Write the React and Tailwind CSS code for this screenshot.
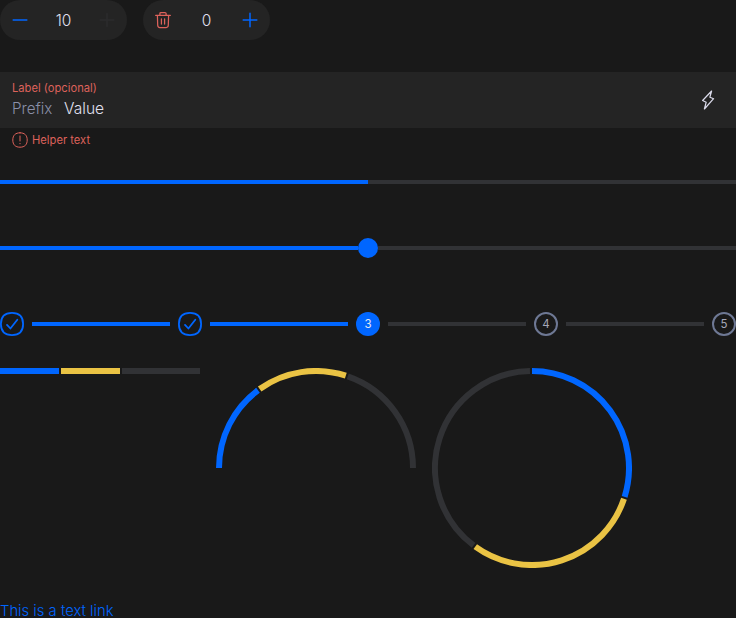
import React from "react";

const BLUE = "#0066ff";
const YELLOW = "#eac344";
const TRACK = "#313235";

// Angles are in degrees, clockwise from twelve o'clock.
function arc(start, end) {
  const point = (deg) => {
    const a = (deg * Math.PI) / 180;
    return `${(100 + 97 * Math.sin(a)).toFixed(3)} ${(100 - 97 * Math.cos(a)).toFixed(3)}`;
  };
  return `M${point(start)}A97 97 0 ${end - start > 180 ? 1 : 0} 1 ${point(end)}`;
}

function Chart({ height, segments }) {
  return (
    <svg width="200" height={height} viewBox={`0 0 200 ${height}`} fill="none" strokeWidth="6">
      {segments.map(([start, end, color]) => (
        <path key={start} d={arc(start, end)} stroke={color} />
      ))}
    </svg>
  );
}

function Plus({ className }) {
  return (
    <svg className={className} width="20" height="20" viewBox="0 0 20 20" fill="none" stroke="currentColor" strokeWidth="1.5" strokeLinecap="round">
      <path d="M3.2 10H16.8M10 3.2V16.8" />
    </svg>
  );
}

function Minus() {
  return (
    <svg width="20" height="20" viewBox="0 0 20 20" fill="none" stroke="#0066ff" strokeWidth="1.5" strokeLinecap="round">
      <path d="M3.2 10H16.8" />
    </svg>
  );
}

function Trash() {
  return (
    <svg width="20" height="20" viewBox="0 0 20 20" fill="none" stroke="#dd625b" strokeWidth="1.25" strokeLinecap="round" strokeLinejoin="round">
      <path d="M2.7 5.4H17.3M6.9 5V3.6Q6.9 2.5 8 2.5H12Q13.1 2.5 13.1 3.6V5M4.4 5.6L4.7 15.3Q4.8 17.5 6.8 17.5H13.2Q15.2 17.5 15.3 15.3L15.6 5.6M8.4 8.8V14M11.6 8.8V14" />
    </svg>
  );
}

function Counter({ value, left, right }) {
  return (
    <div className="flex h-10 w-[127px] items-center justify-between rounded-full bg-[#242424] px-2.5">
      {left}
      <span className="pt-0.5 text-[15.5px] leading-6 font-light text-[#e0e0ef]">{value}</span>
      {right}
    </div>
  );
}

function Done() {
  return (
    <svg className="shrink-0" width="24" height="24" viewBox="0 0 24 24" fill="none" stroke="#0066ff" strokeLinecap="round" strokeLinejoin="round">
      <path strokeWidth="1.8" d="M12 .9C19.3 .9 23.1 4.7 23.1 12S19.3 23.1 12 23.1 .9 19.3 .9 12 4.7 .9 12 .9Z" />
      <path strokeWidth="1.8" d="M7 12.9L10.4 16.5L17.3 7.8" />
    </svg>
  );
}

function Step({ children, active }) {
  return (
    <div
      className={
        active
          ? "flex size-6 shrink-0 items-center justify-center rounded-full bg-[#0066ff] text-[11.5px] leading-4 text-[#e6e6f0]"
          : "flex size-6 shrink-0 items-center justify-center rounded-full border-2 border-[#6e7894] text-[11.5px] leading-4 text-[#a5a7b8]"
      }
    >
      {children}
    </div>
  );
}

function Line({ done }) {
  return <div className={done ? "mx-2 h-1 flex-1 bg-[#0066ff]" : "mx-2 h-1 flex-1 bg-[#313235]"} />;
}

export default function App() {
  return (
    <main className="h-[618px] w-[736px] overflow-hidden bg-[#191919] font-['Inter',sans-serif]">
      <div className="flex gap-4">
        <Counter value="10" left={<Minus />} right={<Plus className="text-[#2b2b2c]" />} />
        <Counter value="0" left={<Trash />} right={<Plus className="text-[#0066ff]" />} />
      </div>

      <div className="mt-8 flex h-14 items-center justify-between bg-[#242424] px-3">
        <div>
          <div className="text-[11.2px] leading-4 text-[#dd625b]">Label (opcional)</div>
          <div className="flex items-baseline gap-3 pt-px text-base leading-6 font-light">
            <span className="w-10 text-[15.2px] text-[#8a8fa8]">Prefix</span>
            <span className="text-[15.6px] text-[#e0e0ef]">Value</span>
          </div>
        </div>
        <svg className="mr-1.5" width="20" height="20" viewBox="0 0 20 20" fill="none" stroke="#dcdcec" strokeWidth="1.2" strokeLinejoin="round">
          <path d="M13.6 1L4.6 10.5L8.2 12.2L6.4 19L15.6 8.7L11.9 7.2Z" />
        </svg>
      </div>
      <div className="flex h-6 items-center gap-1 pl-3 text-[11.2px] leading-4 text-[#dd625b]">
        <svg width="16" height="16" viewBox="0 0 16 16" fill="none" stroke="currentColor" strokeLinecap="round">
          <path d="M8 .8C12.7 .8 15.2 3.3 15.2 8S12.7 15.2 8 15.2 .8 12.7 .8 8 3.3 .8 8 .8ZM8 4V9" />
          <circle cx="8" cy="11.6" r=".65" fill="currentColor" stroke="none" />
        </svg>
        Helper text
      </div>

      <div className="mt-7 h-1 bg-[#313235]">
        <div className="h-full w-1/2 bg-[#0066ff]" />
      </div>

      <div className="mt-[54px] flex h-5 items-center">
        <div className="h-1 flex-1 bg-[#0066ff]" />
        <div className="size-5 rounded-full bg-[#0066ff]" />
        <div className="h-1 flex-1 bg-[#313235]" />
      </div>

      <div className="mt-[54px] flex items-center">
        <Done />
        <Line done />
        <Done />
        <Line done />
        <Step active>3</Step>
        <Line />
        <Step>4</Step>
        <Line />
        <Step>5</Step>
      </div>

      <div className="mt-8 flex h-[200px] items-start gap-4">
        <div className="flex h-1.5 w-[200px] gap-0.5">
          <div className="w-[59px] bg-[#0066ff]" />
          <div className="w-[59px] bg-[#eac344]" />
          <div className="flex-1 bg-[#313235]" />
        </div>
        <Chart
          height={100}
          segments={[
            [-90, -36.7, BLUE],
            [-35.5, 17.9, YELLOW],
            [19.1, 90, TRACK],
          ]}
        />
        <Chart
          height={200}
          segments={[
            [0, 107.3, BLUE],
            [108.5, 215.8, YELLOW],
            [217, 358.8, TRACK],
          ]}
        />
      </div>

      <a className="mt-9 block text-[14.8px] leading-[14px] font-light whitespace-nowrap text-[#0066ff]">This is a text link</a>
    </main>
  );
}
